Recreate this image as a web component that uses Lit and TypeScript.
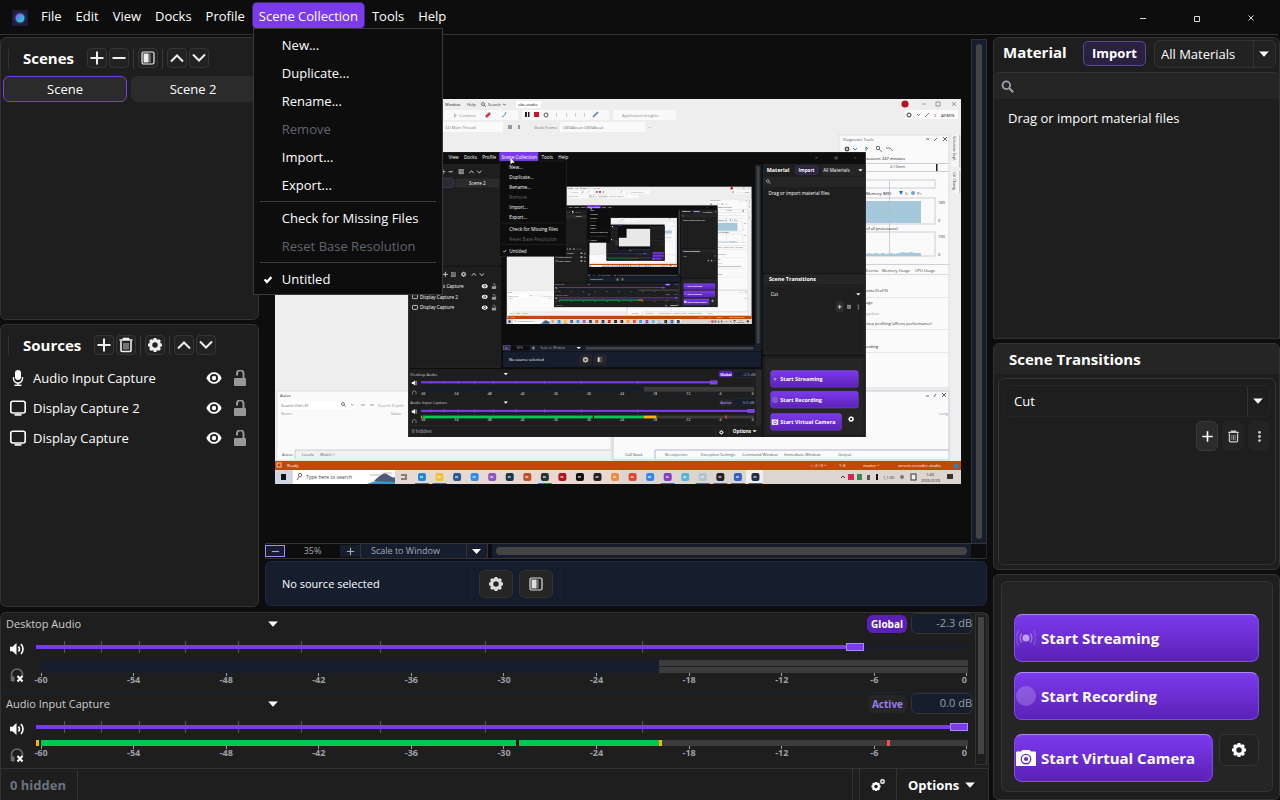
import { LitElement, html, svg, css, nothing, TemplateResult, SVGTemplateResult } from "lit";
import { customElement, state } from "lit/decorators.js";
import { classMap } from "lit/directives/class-map.js";
import { styleMap } from "lit/directives/style-map.js";

/* ---------- icons ---------- */

const icon = (body: SVGTemplateResult, size = 16, box = 16): TemplateResult =>
  html`<svg class="icon" width=${size} height=${size} viewBox="0 0 ${box} ${box}" aria-hidden="true">${body}</svg>`;

const gearShape = (cx: number, cy: number, r: number, fill = "currentColor") => svg`
  <circle cx=${cx} cy=${cy} r=${r * 0.62} fill="none" stroke=${fill} stroke-width=${r * 0.46}></circle>
  ${[0, 45, 90, 135, 180, 225, 270, 315].map((a) => {
    const t = (a * Math.PI) / 180;
    return svg`<line x1=${cx + Math.cos(t) * r * 0.7} y1=${cy + Math.sin(t) * r * 0.7}
      x2=${cx + Math.cos(t) * r} y2=${cy + Math.sin(t) * r} stroke=${fill} stroke-width=${r * 0.42}></line>`;
  })}`;

const plus = svg`<path d="M8 1.5v13M1.5 8h13" stroke="currentColor" stroke-width="2"></path>`;
const minus = svg`<path d="M1.5 8h13" stroke="currentColor" stroke-width="2"></path>`;
const up = svg`<path d="M2 11.5 8 5.5l6 6" fill="none" stroke="currentColor" stroke-width="2"></path>`;
const down = svg`<path d="M2 4.5 8 10.500l6-6" fill="none" stroke="currentColor" stroke-width="2"></path>`;
const gear = gearShape(8, 8, 7);
const trash = svg`<path d="M1.500 3h13M5.500 2.500v-1h5v1M3 4v9.500q0 1 1 1h8q1 0 1-1V4" fill="none" stroke="currentColor" stroke-width="1.600"></path>
  <path d="M6 6v6.500M8 6v6.500M10 6v6.500" stroke="currentColor" stroke-width="1" opacity=".8"></path>`;
const filter = svg`<rect x="2" y="2" width="12" height="12" rx="1.500" fill="none" stroke="currentColor" stroke-width="1.200"></rect>
  <rect x="3.500" y="3.500" width="4.500" height="9" fill="currentColor"></rect>
  <rect x="8" y="3.500" width="1.500" height="9" fill="currentColor" opacity=".6"></rect>
  <rect x="9.500" y="3.500" width="1.500" height="9" fill="currentColor" opacity=".3"></rect>`;
const mic = svg`<rect x="5" y="0" width="6" height="10" rx="3" fill="currentColor"></rect>
  <path d="M3.500 7v1.500a4.500 4.500 0 0 0 9 0V7M8 13v2" fill="none" stroke="currentColor" stroke-width="1.400"></path>
  <path d="M4.500 15.300h7" stroke="currentColor" stroke-width="1.400"></path>`;
const monitor = svg`<rect x=".8" y="1.300" width="14.400" height="11.700" rx="2" fill="none" stroke="currentColor" stroke-width="1.600"></rect>
  <path d="M4.500 14.900h7" stroke="currentColor" stroke-width="1.600"></path>`;
const eye = svg`<path d="M.3 8C2 4.200 4.800 2.200 8 2.200S14 4.200 15.700 8C14 11.800 11.200 13.800 8 13.800S2 11.800.3 8z" fill="currentColor"></path>
  <circle cx="8" cy="8" r="4" fill="#1e1e1e"></circle><circle cx="8" cy="8" r="2.200" fill="currentColor"></circle>`;
const lock = svg`<rect x="2" y="8" width="12" height="8" rx="1" fill="currentColor"></rect>
  <path d="M11.500 8V3.500a2.500 2.500 0 0 0-6.500 0V5.500" fill="none" stroke="currentColor" stroke-width="2"></path>`;
const speaker = svg`<path d="M1 5.700h2.500L7.500 2v12L3.500 10.300H1z" fill="currentColor"></path>
  <path d="M9.500 5.500q2 2.500 0 5" fill="none" stroke="currentColor" stroke-width="1.600"></path>
  <path d="M12 3q4 5 0 10" fill="none" stroke="currentColor" stroke-width="1.600"></path>`;
const headphones = svg`<path d="M2.500 14V7.500a5.500 5.500 0 0 1 11 0V9" fill="none" stroke="#6c6c6c" stroke-width="1.600"></path>
  <path d="M3 9.500h2.500v5H3z" fill="#6c6c6c"></path>
  <path d="m8.500 9 5 5.500m0-5.500-5 5.500" stroke="#fff" stroke-width="2"></path>`;
const search = svg`<circle cx="6.500" cy="6.500" r="4.700" fill="none" stroke="currentColor" stroke-width="2.200"></circle>
  <path d="m10 10 5 5" stroke="currentColor" stroke-width="2.600"></path>`;
const dots = svg`<circle cx="8" cy="3" r="1.700" fill="currentColor"></circle><circle cx="8" cy="8" r="1.700" fill="currentColor"></circle><circle cx="8" cy="13" r="1.700" fill="currentColor"></circle>`;
const caret = svg`<path d="M2.500 5h11L8 11z" fill="currentColor"></path>`;
const check = svg`<path d="m3.500 8.500 3 3.500 6-6.500" fill="none" stroke="currentColor" stroke-width="3"></path>`;
const gears = svg`${gearShape(6, 9.5, 4.6)}${gearShape(12.500, 4.500, 2.6)}`;
const broadcast = svg`<circle cx="10" cy="10" r="3.600" fill="#fff" opacity=".55"></circle>
  <path d="M5.600 5.500q-3 4.500 0 9M14.400 5.500q3 4.500 0 9" fill="none" stroke="#fff" opacity=".35" stroke-width="1.400"></path>
  <path d="M2.600 2.500q-4.600 7.500 0 15M17.400 2.500q4.600 7.500 0 15" fill="none" stroke="#fff" opacity=".15" stroke-width="1.600"></path>`;
const record = svg`<circle cx="10" cy="10" r="10" fill="#fff" opacity=".2"></circle>`;
const camera = svg`<path fill-rule="evenodd" fill="#fff" d="M0 4.500q0-1 1-1h4L6.500 2h7L15 3.500h4q1 0 1 1V18H0zM10 5.700a5.400 5.400 0 1 0 0 10.800 5.400 5.400 0 0 0 0-10.800z"></path>
  <circle cx="10" cy="11" r="3.100" fill="none" stroke="#fff" stroke-width="2"></circle>`;
const logo = html`<svg class="logo" width="16" height="16" viewBox="0 0 16 16" aria-hidden="true">
  <defs><linearGradient id="orb" x1="0" y1="0" x2="1" y2="1"><stop offset="0" stop-color="#b044f0"></stop><stop offset=".5" stop-color="#3fa0e8"></stop><stop offset="1" stop-color="#30e0b0"></stop></linearGradient></defs>
  <rect width="16" height="16" fill="#1e1b3c"></rect><circle cx="8" cy="8" r="6.300" fill="#2b2b55"></circle><circle cx="8" cy="8" r="4.500" fill="url(#orb)"></circle></svg>`;

/* ---------- captured desktop shown in the preview ---------- */

const menus = ["File", "Edit", "View", "Docks", "Profile", "Scene Collection", "Tools", "Help"];
const menuX = [40, 75, 113, 156, 207, 261, 373, 420];
const scale = ["-60", "-54", "-48", "-42", "-36", "-30", "-24", "-18", "-12", "-6", "0"];
const sliderTicks = [3, 7, 11.1, 16, 21.7, 28.4, 36.9, 48.2, 65];

type MenuEntry = { label: string; off?: boolean; on?: boolean } | null;
const entries: MenuEntry[] = [
  { label: "New..." }, { label: "Duplicate..." }, { label: "Rename..." }, { label: "Remove", off: true },
  { label: "Import..." }, { label: "Export..." }, null,
  { label: "Check for Missing Files" }, { label: "Reset Base Resolution", off: true }, null,
  { label: "Untitled", on: true },
];
const entryY = [50, 78, 106, 134, 162, 190, 201, 223, 251, 262, 284];

const box = (x: number, y: number, w: number, h: number, fill: string, stroke = "none", rx = 0) =>
  svg`<rect x=${x} y=${y} width=${w} height=${h} fill=${fill} stroke=${stroke} rx=${rx}></rect>`;

type Word = (x: number, y: number, s: string, size: number, fill: string, bold?: boolean) => unknown;
const drawWord: Word = (x, y, s, size, fill, bold = false) =>
  svg`<text x=${x} y=${y} font-size=${size} fill=${fill} font-weight=${bold ? 700 : 400}>${s}</text>`;
/* The innermost repeat is smaller than a pixel per letter, so it has no lettering. */
const wordFor = (depth: number): Word => (depth > 0 ? drawWord : () => nothing);

const tri = (x: number, y: number) => svg`<path d="M${x - 6} ${y - 3}h12l-6 6z" fill="#fff"></path>`;

function miniStrip(word: Word, y: number, name: string, tag: string, db: string, end: number, live: boolean) {
  const my = y + 47;
  return svg`
    ${word(6, y + 16, name, 11, "#ccc")}${tri(273, y + 11)}
    ${box(869, y + 2, 38, 18, tag === "Global" ? "#5b21b6" : "#262626", "none", 6)}${word(873, y + 15, tag, 10, tag === "Global" ? "#fff" : "#9b7bf0", true)}
    ${box(911, y, 62, 20, "#161e2e", "#333")}${word(936, y + 15, db, 11, "#aaa")}
    <path d="M10 ${y + 33}h4l5-4v14l-5-4h-4z M21 ${y + 30}h2v12h-2z" fill="#fff"></path>
    <path d="M12 ${y + 68}v-5a5 5 0 0 1 10 0v5" fill="none" stroke="#999" stroke-width="2"></path>
    ${box(36, y + 31, end - 36, 6, "#7c3aed")}${box(end - 18, y + 30, 18, 9, "#7c3aed", "#a78bfa")}
    ${[63, 100, 139, 185, 238, 301, 380, 485, 642].map((x) => box(x, y + 28, 1, 12, "#777"))}
    ${live
      ? svg`${box(36, my, 3, 8, "#fbb500")}${box(41, my, 618, 8, "#00c853")}${box(516, my, 4, 8, "#000")}${box(659, my, 36, 8, "#fbb500")}${box(695, my, 273, 8, "#3c3c3c")}${box(887, my, 4, 8, "#f05050")}`
      : svg`${box(41, my, 618, 13, "#161e2e")}${box(659, my, 309, 13, "#3c3c3c")}`}
    ${scale.map((s, i) => word(35 + i * 92.6, my + (live ? 16 : 23), s, 9, "#aaa", true))}`;
}

function miniApp(depth: number): SVGTemplateResult {
  const word = wordFor(depth);
  return svg`<svg x="408" y="151" width="458" height="286" viewBox="0 0 1280 800">
    ${box(0, 3, 1280, 797, "#0d0d0d")}
    ${box(1, 38, 258, 282, "#1e1e1e", "#3a3a3a", 4)}
    ${word(23, 65, "Scenes", 15, "#fff", true)}
    <path d="M90 58h14M97 51v14M113 58h12M171 62l6-7 6 7M193 55l6 7 6-7" fill="none" stroke="#fff" stroke-width="2"></path>
    ${box(142, 52, 12, 12, "#777", "#fff")}
    ${box(3, 77, 124, 25, "#2b2b2b", "#7c3aed", 5)}${box(131, 77, 124, 25, "#2b2b2b", "none", 5)}
    ${word(47, 94, "Scene", 13, "#fff")}${word(170, 94, "Scene 2", 13, "#fff")}
    ${box(1, 325, 258, 281, "#1e1e1e", "#3a3a3a", 4)}
    ${word(23, 352, "Sources", 15, "#fff", true)}
    <path d="M97 345h14M104 338v14M178 349l6-7 6 7M200 342l6 7 6-7" fill="none" stroke="#fff" stroke-width="2"></path>
    ${box(121, 340, 11, 12, "#666", "#ccc")}${gearShape(155, 345, 7, "#ccc")}
    ${["Audio Input Capture", "Display Capture 2", "Display Capture"].map((s, i) => svg`
      <rect x="12" y=${372 + i * 30} width="14" height="11" rx="2" fill="#1e1e1e" stroke="#fff" stroke-width="2"></rect>${word(33, 383 + i * 30, s, 13, "#fff")}
      <ellipse cx="214" cy=${378 + i * 30} rx="8" ry="6" fill="#fff"></ellipse><circle cx="214" cy=${378 + i * 30} r="3" fill="none" stroke="#1e1e1e" stroke-width="2"></circle>
      ${box(234, 378 + i * 30, 12, 8, "#999")}<path d="M243 ${378 + i * 30}v-4a3 3 0 0 0-6 0" fill="none" stroke="#999" stroke-width="2"></path>`)}
    ${depth > 0 ? desktop(depth - 1, 275, 99) : box(275, 99, 686, 385, "#e8e8e8")}
    ${box(971, 39, 16, 504, "#161e2e", "#333")}${box(975, 43, 8, 495, "#444")}
    ${box(265, 544, 722, 15, "#161e2e", "#333")}${box(266, 545, 19, 11, "#2a2550", "#a78bfa")}${box(287, 545, 52, 13, "#0d0d0d")}
    ${word(303, 555, "35%", 9, "#aaa")}${word(370, 555, "Scale to Window", 9, "#aaa")}${tri(477, 551)}
    <path d="M270 551h9M345 551h10M350 546v10" stroke="#bbb" stroke-width="2"></path>${box(496, 548, 470, 7, "#444", "none", 3)}
    ${box(265, 561, 722, 44, "#161e2e", "none", 5)}${word(282, 588, "No source selected", 11, "#fff")}
    ${box(480, 570, 33, 27, "#252525", "#333", 5)}${gearShape(496, 584, 8, "#ccc")}${box(520, 570, 33, 27, "#252525", "#333", 5)}${box(530, 577, 6, 13, "#ddd")}${box(536, 577, 6, 13, "#444", "#888")}
    ${box(1, 612, 987, 188, "#1e1e1e", "#333")}
    ${miniStrip(word, 613, "Desktop Audio", "Global", "-2.3 dB", 864, false)}
    ${box(1, 692, 974, 1, "#1c2a44")}
    ${miniStrip(word, 693, "Audio Input Capture", "Active", "0.0 dB", 968, true)}
    ${box(975, 614, 11, 150, "#2a2a2a", "#3a3a3a")}
    ${box(1, 768, 987, 1, "#3a3a3a")}${word(10, 790, "0 hidden", 13, "#777f8c", true)}${box(859, 770, 1, 30, "#3a3a3a")}${box(896, 770, 1, 30, "#3a3a3a")}
    ${gearShape(876, 787, 6, "#fff")}${word(908, 790, "Options", 13, "#fff", true)}${tri(969, 784)}
    ${box(993, 38, 286, 301, "#1e1e1e", "#3a3a3a")}${word(1003, 58, "Material", 15, "#fff", true)}
    ${box(1084, 42, 62, 23, "#2a2140", "#6b52ab", 5)}${word(1092, 58, "Import", 13, "#fff", true)}
    ${box(1155, 41, 120, 27, "#252525", "#333", 5)}${word(1161, 59, "All Materials", 13, "#fff")}${tri(1265, 54)}
    ${box(994, 73, 284, 26, "#252525", "#333")}<circle cx="1006" cy="84" r="4" fill="none" stroke="#bbb" stroke-width="2"></circle><path d="m1009 87 4 5" stroke="#bbb" stroke-width="2"></path>
    ${word(1008, 123, "Drag or import material files", 13, "#fff")}
    ${box(993, 344, 286, 226, "#1e1e1e", "#3a3a3a", 5)}${box(994, 345, 284, 29, "#252525")}${word(1009, 365, "Scene Transitions", 15, "#fff", true)}
    ${box(998, 379, 277, 186, "none", "#333", 5)}${word(1014, 406, "Cut", 13, "#fff")}${box(1248, 386, 1, 30, "#333")}${tri(1259, 401)}
    ${box(1196, 421, 22, 29, "#2d2d2d", "none", 5)}<path d="M1201 436h12M1207 430v12M1259 430v3M1259 435v3M1259 440v3" stroke="#fff" stroke-width="2"></path>${box(1229, 431, 9, 10, "#777", "#ccc")}
    ${box(993, 575, 286, 224, "#1e1e1e", "#3a3a3a", 5)}${box(1001, 582, 271, 210, "#252525", "#333", 5)}
    ${[[614, 245], [672, 245], [734, 198]].map(([y, w]) => svg`<rect x="1014" y=${y} width=${w} height="47" rx="7" fill="url(#violet)" stroke="#8b5cf6"></rect>`)}
    <circle cx="1026" cy="638" r="4" fill="#a685e8"></circle><circle cx="1026" cy="696" r="9" fill="#8656d8"></circle>
    ${box(1017, 751, 18, 15, "#fff")}<circle cx="1026" cy="759" r="4" fill="#fff" stroke="#5b21b6" stroke-width="2"></circle>
    ${word(1041, 644, "Start Streaming", 15, "#fff", true)}${word(1041, 702, "Start Recording", 15, "#fff", true)}${word(1041, 764, "Start Virtual Camera", 15, "#fff", true)}
    ${gearShape(1239, 750, 8, "#fff")}
    ${box(255, 3, 109, 25, "#7c3aed", "none", 3)}
    ${menus.map((m, i) => word(menuX[i], 21, m, 13, "#fff"))}
    <path d="M1139 19h7M1194 17h6v5h-6zM1247 16l6 6" fill="none" stroke="#ddd"></path>
    ${box(255, 28, 188, 267, "#0d0d0d", "#3a3a3a")}
    ${entries.map((e, i) => e ? word(283, entryY[i], e.label, 13, e.off ? "#666" : "#fff") : box(261, entryY[i], 176, 1, "#3a3a3a"))}
    <path d="m266 280 3 3 5-6" fill="none" stroke="#fff" stroke-width="2"></path>
    <path d="m286 19 0 19 5-5 7 0z" fill="#fff"></path>
  </svg>`;
}

const taskIcons = ["#1f8ad0", "#f5bf3a", "#2a5c9c", "#2c8df0", "#8f55c8", "#173a4a", "#c2502a", "#2b3138", "#b3141c", "#111", "#222", "#ee8d3c", "#e2452b", "#3585f0", "#8540bf", "#57b5d8", "#b0c4d0", "#2a2222", "#3060c0", "#20304a"];

function desktop(depth: number, x: number, y: number): SVGTemplateResult {
  const g = "#777";
  const word = wordFor(depth);
  return svg`<svg x=${x} y=${y} width="686" height="385" viewBox="275 99 686 385">
    ${box(275, 99, 686, 385, "#eeeeee")}
    ${word(445, 106, "Window", 4, "#222")}${word(467, 106, "Help", 4, "#222")}${word(488, 106, "Search", 4, "#222")}
    <circle cx="483" cy="104" r="1.500" fill="none" stroke="#444" stroke-width=".7"></circle><path d="m484 105 2 2M503 104l1.500 1 1.500-1" fill="none" stroke="#444" stroke-width=".7"></path>
    ${box(516, 101, 25, 7, "#fff")}${word(518, 106, "obs-studio", 4, "#111")}
    ${box(444, 110, 74, 10, "#f9f9f9")}${word(459, 117, "Continue", 4, "#888")}<path d="M454 113v5l3-2.500z" fill="#bbb"></path>
    <path d="m486 117 4-4" stroke="#d23a4a" stroke-width="2.500"></path><path d="M502 117q3-1 4-5" fill="none" stroke="#4a8ad0"></path>
    ${box(522, 110, 87, 10, "#f9f9f9")}${box(525, 112, 2, 5, "#222")}${box(528, 112, 1.500, 5, "#222")}${box(534, 112, 5, 5, "#d0102a")}
    <circle cx="546" cy="115" r="2" fill="none" stroke="#555"></circle>${[556, 566, 575, 584].map((v) => box(v, 113, 1, 4, "#ccc"))}<path d="m593 117 5-5" stroke="#4a78b8" stroke-width="1.500"></path>
    ${box(613, 110, 63, 10, "#f9f9f9")}${word(622, 117, "Application Insights", 4, "#888")}
    ${box(443, 122, 60, 10, "#fafafa")}${word(445, 129, "32) Main Thread", 4, g)}${box(508, 125, 4, 4, "#999")}${box(518, 125, 2, 4, "#999")}
    ${word(534, 129, "Stack Frame:", 4, g)}${box(560, 122, 85, 10, "#fafafa")}${word(563, 129, "OBSAbout::OBSAbout", 4, g)}${word(648, 128, "...", 4, "#555")}
    <circle cx="905" cy="104" r="3.600" fill="#b8101c"></circle>
    <path d="M922 104h4M936 102h4v4h-4zM952 102l4 4m0-4-4 4" fill="none" stroke="#777" stroke-width=".7"></path>
    ${box(905, 110, 53, 9, "#fbfbfb")}<circle cx="909" cy="115" r="2" fill="none" stroke="#333"></circle>${word(934, 117, "2", 4, "#a03020")}${word(941, 117, "ADMIN", 4, "#222")}<path d="m917 114 1.500 1.500 1.500-1.500M925 117l4-4" fill="none" stroke="#555" stroke-width=".8"></path>
    ${box(839, 135, 110, 253, "#fafafa", "#ddd")}
    ${word(843, 141, "Diagnostic Tools", 4, "#42546a")}<path d="M926 139h3M934 141l3-3M943 137l4 4m0-4-4 4" stroke="#444" stroke-width=".8"></path>
    ${gearShape(847, 149, 2.5, "#444")}<path d="M853 148l2 2 2-2M866 151v-4l2 2" fill="none" stroke="#357abf"></path>
    <circle cx="878" cy="148" r="1.700" fill="none" stroke="#444" stroke-width=".8"></circle><path d="m879 149 3 3M886 148h4l3 3" fill="none" stroke="#666" stroke-width=".8"></path>
    ${word(866, 160, "session: 247 minutes", 4, "#111")}
    ${box(839, 163, 110, 1, "#ccccd8")}${box(839, 171, 110, 1, "#ccccd8")}${word(890, 168, "2:10min", 4, "#444")}${box(936, 164, 1.500, 7, "#222")}
    ${box(840, 180, 95, 8, "none", "#ccccd8")}${word(866, 195, "Memory (MB)", 4, "#111")}<path d="M899 191h4l-2 4z" fill="#1875c8"></path><circle cx="913" cy="193" r="2" fill="#6ba9cc"></circle>
    ${word(905, 195, "S.", 4, "#444")}${word(917, 195, "Pr.", 4, "#444")}
    ${box(840, 198, 95, 26, "none", "#ccccd8")}${box(840, 201, 81, 22, "#a5c8da")}${box(889, 181, 0.7, 76, "#b4bcc8")}
    ${word(938, 204, "189", 4, "#333")}${word(938, 222, "0", 4, "#333")}
    ${word(866, 230, "of all processors)", 4, "#111")}${box(840, 232, 95, 24, "none", "#ccccd8")}
    <path d="M866 256v-2l3-1 3 1 4-1 3 1 4-1 3 1 5-1 4 1 4-1 4-1 4 1 4-1 4 1 6 0v3z" fill="#a5c8da"></path>
    ${word(938, 238, "100", 4, "#333")}${word(938, 256, "0", 4, "#333")}
    ${box(839, 264, 110, 1, "#d0d0d8")}${word(866, 272, "Events", 4, "#444")}${word(882, 272, "Memory Usage", 4, "#444")}${word(915, 272, "CPU Usage", 4, "#444")}
    ${box(839, 274, 110, 1, "#d8d8de")}
    ${word(866, 292, "ents (0 of 0)", 4, "#222")}${word(866, 304, "age", 4, "#222")}${word(866, 315, "apshot", 4, "#999")}${word(866, 325, "step profiling (affects performance)", 4, "#333")}${word(866, 348, "ording", 4, "#222")}
    ${[297, 329, 352].map((v) => box(866, v, 83, 0.7, "#ddd"))}
    ${box(952, 135, 7, 32, "#f5f5f5")}${box(952, 171, 7, 22, "#f5f5f5")}${box(959, 135, 1.500, 32, "#c8c8c8")}${box(959, 171, 1.500, 22, "#c8c8c8")}
    ${depth > 0 ? svg`<text font-size="4" fill="#444" transform="translate(953 136) rotate(90)">Solution Expl.</text><text font-size="4" fill="#444" transform="translate(953 172) rotate(90)">Git Chang.</text>` : nothing}
    ${box(277, 391, 334, 69, "#fafafa", "#ddd")}${word(280, 397, "Autos", 4, "#333")}${box(279, 401, 77, 8, "#fff")}${word(281, 407, "Search (Ctrl+E)", 4, "#555")}
    <circle cx="343" cy="404" r="1.500" fill="none" stroke="#444" stroke-width=".7"></circle><path d="m344 405 2 2M351 404l1.500 1.500 1.500-1.500M361 405h4M370 405h4" fill="none" stroke="#777" stroke-width=".7"></path>
    ${word(378, 407, "Search Depth:", 4, "#999")}${word(281, 415, "Name", 4, "#999")}${word(391, 415, "Value", 4, "#888")}
    ${box(277, 450, 334, 10, "#f1f1f1")}${box(277, 450, 18, 9, "#fafafa")}
    ${word(282, 456, "Autos", 4, "#555")}${word(302, 456, "Locals", 4, "#555")}${word(320, 456, "Watch 1", 4, "#555")}<path d="M295 459v-9h316" fill="none" stroke="#bbb" stroke-width=".7"></path>
    ${box(613, 391, 336, 69, "#fafafa", "#c9c5e0")}<path d="M655 459v-9h294" fill="none" stroke="#b7b0dc"></path><path d="M926 396h3M934 397l2-3M942 393l4 4m0-4-4 4" stroke="#444" stroke-width=".8"></path>
    ${word(625, 456, "Call Stack", 4, "#444")}${word(665, 456, "Breakpoints", 4, "#666")}${word(701, 456, "Exception Settings", 4, "#555")}${word(742, 456, "Command Window", 4, "#555")}${word(784, 456, "Immediate Window", 4, "#555")}${word(838, 456, "Output", 4, "#666")}${word(939, 415, "Lang", 4, "#999")}
    ${box(275, 461, 686, 9, "#bc4a08")}${box(277, 463, 4, 4, "none", "#f0c0a0")}${word(287, 467, "Ready", 4, "#fff")}
    ${word(810, 467, "↑↓ 2 / 0  ^", 4, "#fff")}${word(839, 467, "✎ 8", 4, "#fff")}${word(863, 467, "master  ^", 4, "#fff")}${word(898, 467, "screen-recorder-studio", 4, "#fff")}<circle cx="956" cy="466" r="2.500" fill="#2d7dd0"></circle>
    ${box(275, 470, 686, 14, "#e8d8d2")}${box(620, 470, 341, 14, "#dcd5d0")}${box(275, 470, 17, 14, "#ced6e4")}${box(281, 474, 5, 6, "#111")}
    ${box(293, 470, 102, 14, "#fff")}<circle cx="300" cy="475" r="1.700" fill="none" stroke="#444" stroke-width=".8"></circle><path d="m299 477-2 3" stroke="#444" stroke-width=".8"></path>
    ${word(306, 479, "Type here to search", 5, "#444")}
    <path d="M367 484q10-4 28-7v7z" fill="#2f9cc4"></path><path d="M374 481q7-7 11-8l10 6v3z" fill="#4f5878"></path><path d="M370 475h10M383 473h9" stroke="#c2b8c8"></path>
    <path d="M401 475h4M401 479h4M406 474v6" stroke="#222"></path>
    ${box(746, 470, 17, 14, "#f2eeec")}
    ${taskIcons.map((c, i) => svg`${box(418 + i * 17.55, 473, 8, 8, c, "none", 2)}${box(420 + i * 17.55, 476, 3, 2, "#ffffff90")}${[0, 1, 7, 14, 16, 17, 18, 19].includes(i) ? box(415 + i * 17.55, 483, 14, 1, "#1878d0") : nothing}`)}
    <path d="m841 478 2-2 2 2" fill="none" stroke="#333"></path>${box(848, 474, 6, 6, "#e02058")}${box(857, 474, 5, 6, "#3a8a50")}${box(867, 475, 3, 5, "#555")}${box(876, 474, 2, 6, "#111")}${word(883, 479, "1,1:00", 4, "#333")}<circle cx="902" cy="477" r="2" fill="#777"></circle>${box(911, 474, 5, 6, "#eee", "#333")}
    ${word(926, 476, "1:40", 4, "#222")}${word(921, 482, "2025/2/20", 4, "#222")}${box(947, 474, 6, 5, "#333")}
    ${miniApp(depth)}
  </svg>`;
}

/* ---------- application ---------- */

interface Strip { id: string; name: string; tag: string; db: string; level: number; stereo: boolean }

@customElement("app-root")
export class AppRoot extends LitElement {
  @state() private menuOpen = true;
  @state() private scene = "Scene";
  @state() private strips: Strip[] = [
    { id: "desktop", name: "Desktop Audio", tag: "Global", db: "-2.3 dB", level: 88.6, stereo: true },
    { id: "input", name: "Audio Input Capture", tag: "Active", db: "0.0 dB", level: 100, stereo: false },
  ];

  static styles = css`
    :host { display: block; height: 100vh; min-height: 700px; overflow: hidden; background: #0d0d0d; color: #fff;
      font: 13px/18px "Open Sans", "Noto Sans", sans-serif; }
    * { box-sizing: border-box; }
    button, input, select { font: inherit; color: inherit; margin: 0; padding: 0; border: 0; background: none; outline: 0; }
    h2 { margin: 0; font-size: 15px; line-height: 20px; font-weight: 700; white-space: nowrap; }
    .icon, .logo { display: block; flex: none; }
    .app { display: flex; flex-direction: column; height: 100%; }

    .menubar { display: flex; align-items: flex-start; gap: 2px; height: 35px; padding: 3px 19px 0 12px; margin: 0 2px 0 0; border-bottom: 1px solid #333; flex: none; }
    .logo { margin: 7px 5px 0 0; }
    .menuwrap { position: relative; }
    .top { display: block; height: 25px; padding: 0 6px; border-radius: 4px; white-space: nowrap; line-height: 27px; }
    .top.active { background: #7c3aed; box-shadow: 0 0 0 1px #3f2a70; }
    .menu { position: absolute; z-index: 5; top: 25px; left: 0; width: 190px; padding: 2px 0 1px; margin: 0; background: #0d0d0d; border: 1px solid #3a3a3a; }
    .entry { display: grid; grid-template-columns: 28px 1fr; align-items: center; width: 100%; height: 28px; text-align: left; white-space: nowrap; }
    .entry .icon { margin-left: 8px; grid-column: 1; grid-row: 1; }
    .entry span { grid-column: 2; }
    .entry:disabled { color: #606570; }
    .rule { height: 1px; margin: 2px 6px; background: #3a3a3a; }
    .win { display: flex; margin-left: auto; gap: 38px; padding-top: 4px; }
    .win button { width: 16px; height: 20px; display: grid; place-items: center; color: #ddd; }

    .body { flex: 1; min-height: 0; display: grid; grid-template-columns: minmax(0, 1fr) 287px; gap: 4px; padding: 2px 0 0; }
    .main { display: flex; flex-direction: column; gap: 5px; min-height: 0; }
    .work { flex: 1; min-height: 0; display: grid; grid-template-columns: 259px minmax(0, 1fr); gap: 6px; padding-right: 2px; }
    .stack { display: flex; flex-direction: column; gap: 4px; min-height: 0; }
    .panel { background: #1e1e1e; border: 1px solid #333; border-radius: 6px; min-height: 0; }
    .grow { flex: 1; }

    .dockhead { display: flex; align-items: center; height: 38px; padding: 2px 0 0 7px; }
    .dockhead::before { content: ""; width: 1px; height: 19px; background: #333; margin-right: 14px; }
    .tools { display: flex; align-items: center; gap: 2px; margin-left: 13px; }
    .tool { width: 20px; height: 20px; display: grid; place-items: center; border: 1px solid #353535; border-radius: 4px; background: #222; color: #eee; }
    .sep { width: 1px; height: 19px; background: #3a3a3a; margin: 0 2px; }
    .scenes { display: grid; grid-template-columns: 1fr 1fr; gap: 4px; padding: 0 3px 0 2px; }
    .scene { height: 26px; border-radius: 6px; background: #2b2b2b; border: 1px solid transparent; }
    .scene.sel { border-color: #7c3aed; }
    .source { display: grid; grid-template-columns: 16px 1fr 20px 16px; column-gap: 7px; align-items: center; height: 30px; padding: 0 10px 0 9px; }
    .source button { display: grid; place-items: center; }
    .source .lock { color: #9a9894; }
    .source .vis { margin-right: 3px; }

    .view { display: flex; flex-direction: column; min-width: 0; min-height: 0; }
    .canvas { flex: 1; min-height: 0; display: flex; margin-top: 2px; }
    .stage { flex: 1; min-width: 0; display: flex; align-items: center; padding: 0 10px; }
    .stage > svg { width: 100%; max-height: 100%; display: block; }
    .vbar { width: 16px; padding: 4px; background: #161e2e; border: solid #2e3238; border-width: 1px 1px 0; display: flex; }
    .thumb { flex: 1; border-radius: 4px; background: #444; }
    .zoom { display: flex; height: 16px; border: 1px solid #333; border-right-color: #17233a; font-size: 9px; line-height: 12px; color: #a5a9b2; flex: none; align-items: stretch; }
    .zoom button { width: 20px; background: #161e2e; display: grid; place-items: center; margin: 1px 0; }
    .zoom .out { border: 1px solid #a78bfa; margin-left: -1px; }
    .zoom output { width: 55px; text-align: center; line-height: 14px; }
    .zoom .pick { width: 128px; border: 1px solid #333; border-width: 0 1px; background: #161e2e; margin-right: 4px; grid-template-columns: 1fr 21px; }
    .zoom .pick select { padding-left: 10px; }
    .hbar { flex: 1; display: flex; padding: 3px 4px; background: #161e2e; margin-right: 15px; }
    .props { display: flex; align-items: center; gap: 6px; height: 45px; margin: 2px 0 1px; padding: 0 16px; background: #161e2e; border: 1px solid #1a2740; border-radius: 6px; font-size: 11px; flex: none; }
    .props p { margin: 0; width: 182px; }
    .props .sep { height: 30px; background: #1e2126; margin: 0 1px; }
    .props button { width: 34px; height: 28px; display: grid; place-items: center; border: 1px solid #333; border-radius: 6px; background: #252525; color: #ddd; }

    .pick { display: grid; grid-template-columns: 1fr 22px; align-items: center; }
    .pick select { appearance: none; grid-area: 1 / 1 / 2 / 3; width: 100%; height: 100%; }
    .pick option { background: #1e1e1e; }
    .pick .icon { grid-area: 1 / 2; justify-self: center; pointer-events: none; color: #fff; }
    .pick .div { grid-area: 1 / 2; justify-self: start; width: 1px; height: 100%; background: #333; }

    .mixer { flex: none; border-bottom: 0; border-radius: 6px 6px 0 0; }
    .mixrow { display: flex; }
    .strips { flex: 1; min-width: 0; }
    .strip { border-bottom: 1px solid #17233a; padding-bottom: 6px; }
    .strip:last-child { border: 0; padding-bottom: 5px; }
    .striphead { display: flex; align-items: center; height: 22px; font-size: 11px; color: #ccc; padding-right: 2px; }
    .name { display: flex; align-items: center; justify-content: space-between; width: 279px; padding: 0 0 0 5px; }
    .name .icon { color: #fff; }
    .tag { margin: 0 4px 0 auto; height: 18px; padding: 0 4px; border-radius: 6px; font-size: 10px; font-weight: 700; line-height: 18px; background: #252525; color: #9b7bf0; }
    .tag.global { background: #5b21b6; color: #fff; }
    .db { width: 62px; height: 21px; text-align: right; background: #161e2e; border: 1px solid #333; border-radius: 6px; color: #9a9ea8; line-height: 18px; align-self: flex-start; padding-bottom: 2px; }
    .stripbody { display: grid; grid-template-columns: 35px minmax(0, 1fr); padding: 6px 7px 0 0; }
    .mutes { display: flex; flex-direction: column; gap: 10px; padding-left: 8px; }
    .vol { position: relative; height: 12px; display: flex; align-items: center; margin-bottom: 7px; }
    .vol input { appearance: none; width: 100%; height: 12px; position: relative; }
    .vol input::-webkit-slider-runnable-track { height: 4px; background: linear-gradient(to right, #7c3aed var(--level), #161e2e var(--level)); }
    .vol input::-webkit-slider-thumb { appearance: none; width: 18px; height: 8px; margin-top: -2px; background: #7c3aed; border: 1px solid #a78bfa; }
    .tick { position: absolute; top: 0; width: 1px; height: 12px; background: #55555f; }
    .meter { display: block; width: 100%; height: 6px; }
    .stereo .meter { height: 13px; }
    .scale { display: flex; justify-content: space-between; margin: 0 1px 0 5px; height: 13px; font-size: 9px; line-height: 8px; font-weight: 700; color: #9ca0aa; }
    .scale span { width: 0; display: flex; flex-direction: column; align-items: center; }
    .scale span::before { content: ""; width: 1px; height: 3px; flex: none; background: #9ca0aa; }
    .scale span:last-child { align-items: flex-end; }
    .mixbar { width: 12px; margin: 1px 1px 3px 0; padding: 2px; border: 1px solid #333; display: flex; }
    .mixbar .thumb { border-radius: 0; margin-bottom: 8px; }
    .foot { display: flex; align-items: stretch; height: 32px; border-top: 1px solid #333; font-weight: 700; }
    .foot .hidden { width: 77px; padding: 0 0 0 9px; text-align: left; color: #6b7280; border-right: 1px solid #333; margin-top: 1px; }
    .foot .grow { border-right: 1px solid #333; }
    .foot .adv { width: 38px; margin-left: 6px; border: solid #333; border-width: 0 1px; display: grid; place-items: center; }
    .foot .opts { display: flex; align-items: center; justify-content: space-between; width: 91px; padding: 0 11px; }

    .side { display: flex; flex-direction: column; gap: 4px; min-height: 0; }
    .material { flex: 302; border-radius: 6px 6px 0 0; }
    .mathead { display: flex; align-items: flex-start; height: 34px; padding: 2px 3px 0 9px; }
    .mathead h2 { margin-top: 2px; }
    .import { margin: 1px 8px 0 auto; height: 25px; width: 63px; padding-bottom: 1px; border: 1px solid #5b4694; border-radius: 5px; background: #2a2140; font-weight: 700; }
    .mathead .pick { width: 122px; height: 28px; border: 1px solid #333; border-radius: 6px; background: #222; }
    .mathead select { padding-left: 6px; }
    .find { display: flex; align-items: center; gap: 6px; height: 27px; padding-left: 7px; background: #252525; border-top: 1px solid #333; border-radius: 5px 5px 0 0; color: #9ca3af; }
    .find input { flex: 1; min-width: 0; }
    .drop { margin: 0; padding: 10px 14px; }
    .trans { flex: 226; display: flex; flex-direction: column; }
    .trans h2 { padding: 5px 15px; height: 30px; background: #252525; border-radius: 5px 5px 0 0; }
    .inset { flex: 1; margin: 4px 3px 4px 4px; padding: 6px 5px 6px 4px; border: 1px solid #333; border-radius: 6px; }
    .inset .pick { height: 32px; border: 1px solid #252525; border-radius: 6px; }
    .inset select { padding-left: 10px; }
    .tbtns { display: flex; justify-content: flex-end; gap: 4px; margin-top: 4px; }
    .tbtns button { width: 22px; height: 30px; display: grid; place-items: center; border-radius: 6px; background: #232323; color: #ccc; }
    .tbtns .hot { background: #2b2b2b; border: 1px solid #3a3a3a; color: #fff; }
    .controls { flex: 226; display: flex; }
    .ctl { flex: 1; margin: 6px 6px 7px 7px; padding: 32px 13px 0 12px; background: #252525; border: 1px solid #333; border-radius: 6px; display: flex; flex-direction: column; gap: 10px; }
    .big { display: flex; align-items: center; gap: 5px; width: 100%; height: 48px; padding-left: 1px; border: 1px solid #7c4bea; border-top-color: #a78bfa; border-radius: 8px; background: linear-gradient(#7c3aed, #5b21b6); font-size: 15px; font-weight: 700; white-space: nowrap; }
    .camrow { display: flex; align-items: flex-start; gap: 6px; margin-top: 4px; }
    .cfg { flex: none; width: 40px; height: 32px; display: grid; place-items: center; border: 1px solid #353535; border-radius: 6px; background: #222; }
  `;

  private tool(label: string, body: SVGTemplateResult, size = 16) {
    return html`<button class="tool" aria-label=${label}>${icon(body, size)}</button>`;
  }

  private renderMenu() {
    return html`<div class="menu" role="menu">
      ${entries.map((e) => e
        ? html`<button class="entry" role="menuitem" ?disabled=${!!e.off}>${e.on ? icon(check, 12) : nothing}<span>${e.label}</span></button>`
        : html`<div class="rule"></div>`)}
    </div>`;
  }

  private renderMeter(s: Strip) {
    if (s.stereo) {
      return html`<svg class="meter" viewBox="0 0 932 13" preserveAspectRatio="none" aria-hidden="true">
        ${box(5, 0, 618, 13, "#161e2e")}${box(623, 0, 309, 6, "#3c3c3c")}${box(623, 7, 309, 6, "#3c3c3c")}</svg>`;
    }
    return html`<svg class="meter" viewBox="0 0 932 6" preserveAspectRatio="none" aria-hidden="true">
      ${box(0, 0, 3, 6, "#fbb500")}${box(5, 0, 618, 6, "#00c853")}${box(480, 0, 3, 6, "#000")}${box(623, 0, 309, 6, "#3c3c3c")}
      ${box(623, 0, 3, 6, "#fbb500")}${box(851, 0, 3, 6, "#f85050")}</svg>`;
  }

  private setLevel(s: Strip, e: Event) {
    const level = Number((e.target as HTMLInputElement).value);
    this.strips = this.strips.map((x) => (x === s ? { ...x, level } : x));
  }

  private renderStrip(s: Strip) {
    return html`<section class=${classMap({ strip: true, stereo: s.stereo })}>
      <div class="striphead">
        <button class="name"><span>${s.name}</span>${icon(caret, 14)}</button>
        <span class=${classMap({ tag: true, global: s.tag === "Global" })}>${s.tag}</span>
        <input class="db" aria-label="${s.name} volume in decibels" .value=${s.db}>
      </div>
      <div class="stripbody">
        <div class="mutes">
          <button aria-label="Mute ${s.name}">${icon(speaker)}</button>
          <button aria-label="Monitor ${s.name}">${icon(headphones)}</button>
        </div>
        <div>
          <div class="vol">
            ${sliderTicks.map((t) => html`<i class="tick" style=${styleMap({ left: `${t}%` })}></i>`)}
            <input type="range" min="0" max="100" step="0.1" aria-label="${s.name} volume" .value=${String(s.level)}
              style=${styleMap({ "--level": `${s.level}%` })} @input=${(e: Event) => this.setLevel(s, e)}>
          </div>
          ${this.renderMeter(s)}
          <div class="scale">${scale.map((n) => html`<span>${n}</span>`)}</div>
        </div>
      </div>
    </section>`;
  }

  render() {
    return html`<div class="app">
      <nav class="menubar">
        ${logo}
        ${menus.map((m) => m === "Scene Collection"
          ? html`<div class="menuwrap"><button class=${classMap({ top: true, active: this.menuOpen })} aria-haspopup="menu"
              @click=${() => (this.menuOpen = !this.menuOpen)}>${m}</button>${this.menuOpen ? this.renderMenu() : nothing}</div>`
          : html`<button class="top">${m}</button>`)}
        <div class="win">
          <button aria-label="Minimize">${icon(svg`<path d="M5 9.500h6" stroke="currentColor"></path>`)}</button>
          <button aria-label="Maximize">${icon(svg`<path d="M5.500 7.500h5v5h-5z" fill="none" stroke="currentColor"></path>`)}</button>
          <button aria-label="Close">${icon(svg`<path d="m5.500 6.500 5 5m0-5-5 5" stroke="currentColor"></path>`)}</button>
        </div>
      </nav>

      <div class="body">
        <div class="main">
          <div class="work">
            <div class="stack">
              <section class="panel grow">
                <header class="dockhead"><h2>Scenes</h2>
                  <div class="tools">${this.tool("Add scene", plus)}${this.tool("Remove scene", minus)}<i class="sep"></i>${this.tool("Scene filters", filter)}<i class="sep"></i>${this.tool("Move up", up)}${this.tool("Move down", down)}</div>
                </header>
                <div class="scenes">${["Scene", "Scene 2"].map((s) => html`<button class=${classMap({ scene: true, sel: s === this.scene })} @click=${() => (this.scene = s)}>${s}</button>`)}</div>
              </section>
              <section class="panel grow">
                <header class="dockhead"><h2>Sources</h2>
                  <div class="tools">${this.tool("Add source", plus)}${this.tool("Remove source", trash)}<i class="sep"></i>${this.tool("Source properties", gear)}<i class="sep"></i>${this.tool("Move up", up)}${this.tool("Move down", down)}</div>
                </header>
                ${[["Audio Input Capture", mic], ["Display Capture 2", monitor], ["Display Capture", monitor]].map(([n, i]) => html`
                  <div class="source">${icon(i as SVGTemplateResult)}<span>${n}</span>
                    <button class="vis" aria-label="Hide ${n}">${icon(eye)}</button><button class="lock" aria-label="Lock ${n}">${icon(lock)}</button></div>`)}
              </section>
            </div>

            <div class="view">
              <div class="canvas">
                <div class="stage"><svg viewBox="0 0 686 385" role="img" aria-label="Preview">
                  <defs><linearGradient id="violet" x1="0" y1="0" x2="0" y2="1"><stop offset="0" stop-color="#7c3aed"></stop><stop offset="1" stop-color="#5b21b6"></stop></linearGradient></defs>
                  ${desktop(2, 0, 0)}</svg></div>
                <div class="vbar"><div class="thumb"></div></div>
              </div>
              <div class="zoom">
                <button class="out" aria-label="Zoom out">${icon(minus, 9)}</button><output>35%</output>
                <button aria-label="Zoom in">${icon(plus, 9)}</button>
                <div class="pick"><select aria-label="Preview scaling"><option>Scale to Window</option></select><i class="div"></i>${icon(caret, 13)}</div>
                <div class="hbar"><div class="thumb"></div></div>
              </div>
              <div class="props"><p>No source selected</p><i class="sep"></i>
                <button aria-label="Properties">${icon(gear)}</button><button aria-label="Filters">${icon(filter)}</button><i class="sep"></i></div>
            </div>
          </div>

          <section class="panel mixer">
            <div class="mixrow"><div class="strips">${this.strips.map((s) => this.renderStrip(s))}</div><div class="mixbar"><div class="thumb"></div></div></div>
            <footer class="foot"><button class="hidden">0 hidden</button><div class="grow"></div>
              <button class="adv" aria-label="Advanced audio properties">${icon(gears)}</button>
              <button class="opts">Options ${icon(caret, 14)}</button></footer>
          </section>
        </div>

        <aside class="side">
          <section class="panel material">
            <div class="mathead"><h2>Material</h2><button class="import">Import</button>
              <div class="pick"><select aria-label="Material type"><option>All Materials</option></select><i class="div"></i>${icon(caret, 14)}</div></div>
            <div class="find">${icon(search, 13)}<input type="text" aria-label="Search materials"></div>
            <p class="drop">Drag or import material files</p>
          </section>
          <section class="panel trans">
            <h2>Scene Transitions</h2>
            <div class="inset">
              <div class="pick"><select aria-label="Transition"><option>Cut</option></select><i class="div"></i>${icon(caret, 14)}</div>
              <div class="tbtns"><button class="hot" aria-label="Add transition">${icon(plus, 13)}</button><button aria-label="Remove transition">${icon(trash, 13)}</button><button aria-label="More">${icon(dots, 13)}</button></div>
            </div>
          </section>
          <section class="panel controls">
            <div class="ctl">
              <button class="big">${icon(broadcast, 20, 20)}Start Streaming</button>
              <button class="big">${icon(record, 20, 20)}Start Recording</button>
              <div class="camrow"><button class="big">${icon(camera, 20, 20)}Start Virtual Camera</button><button class="cfg" aria-label="Virtual camera settings">${icon(gear)}</button></div>
            </div>
          </section>
        </aside>
      </div>
    </div>`;
  }
}
